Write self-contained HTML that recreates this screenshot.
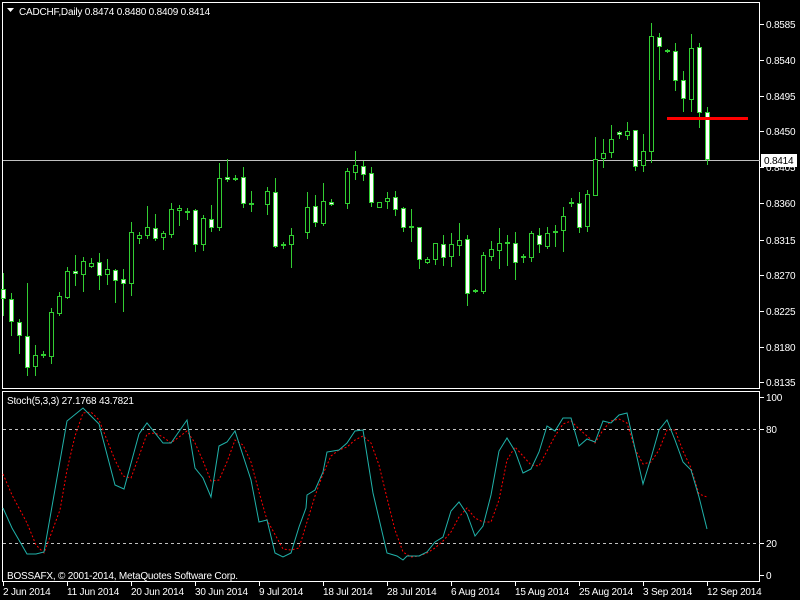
<!DOCTYPE html>
<html><head><meta charset="utf-8"><style>
html,body{margin:0;padding:0;background:#000;width:800px;height:600px;overflow:hidden}
svg{display:block}
text{font-family:"Liberation Sans",sans-serif;font-size:10px;letter-spacing:-0.2px;fill:#fff}
</style></head><body>
<svg width="800" height="600" viewBox="0 0 800 600" xmlns="http://www.w3.org/2000/svg">
<rect width="800" height="600" fill="#000"/>
<rect x="2.5" y="2.5" width="757" height="386" fill="none" stroke="#fff"/>
<rect x="2.5" y="391.5" width="757" height="190" fill="none" stroke="#fff"/>
<line x1="3" y1="160.5" x2="760" y2="160.5" stroke="#c0c0c0"/>
<path d="M7 8h7l-3.5 4z" fill="#fff"/>
<text x="19" y="15">CADCHF,Daily  0.8474 0.8480 0.8409 0.8414</text>
<g stroke="#fff">
<path d="M760 24.5h4M760 60.5h4M760 96.5h4M760 131.5h4M760 167.5h4M760 203.5h4M760 240.5h4M760 275.5h4M760 311.5h4M760 347.5h4M760 382.5h4M760 397.5h4M760 429.5h4M760 543.5h4M760 575.5h4"/>
</g>
<g>
<text x="766" y="28">0.8585</text><text x="766" y="64">0.8540</text><text x="766" y="100">0.8495</text>
<text x="766" y="135">0.8450</text><text x="766" y="171">0.8405</text><text x="766" y="207">0.8360</text>
<text x="766" y="244">0.8315</text><text x="766" y="279">0.8270</text><text x="766" y="315">0.8225</text>
<text x="766" y="351">0.8180</text><text x="766" y="386">0.8135</text>
<text x="766" y="401">100</text><text x="766" y="433">80</text><text x="766" y="547">20</text><text x="766" y="579">0</text>
</g>
<rect x="761" y="154" width="36" height="13" fill="#fff"/>
<text x="764" y="164" style="fill:#000">0.8414</text>
<path stroke="#32cd32" fill="none" d="
M3.5 273V316M11.5 293V336M19.5 319V354M27.5 283V376M35.5 345V376M43.5 351V358M51.5 308V364M59.5 292V316M67.5 267V299M75.5 255V286
M83.5 257V292M91.5 258V268M99.5 253V290M107.5 259V285M115.5 269V303M123.5 269V312M131.5 222V296M139.5 232V244M147.5 206V239M155.5 214V241
M163.5 231V250M171.5 203V238M179.5 205V226M187.5 208V220M195.5 209V252M203.5 215V251M211.5 205V232M219.5 163V231M227.5 159V182M235.5 175V181
M243.5 167V208M251.5 191V212M267.5 187V215M275.5 178V248M283.5 242V249M291.5 228V268M307.5 192V239M315.5 195V227M323.5 183V226M331.5 199V206
M347.5 168V209M355.5 151V180M363.5 161V181M371.5 167V207M379.5 202V208M387.5 192V209M395.5 191V216M403.5 207V232M411.5 209V242M419.5 227V269
M427.5 257V264M435.5 243V265M443.5 235V266M451.5 233V267M459.5 223V256M467.5 235V306M475.5 289V293M483.5 252V294M491.5 241V261M499.5 228V269
M507.5 235V266M515.5 232V280M523.5 254V263M531.5 231V262M539.5 228V253M547.5 227V249M555.5 225V247M563.5 207V252M571.5 198V207M579.5 192V233
M587.5 190V232M595.5 137V196M603.5 139V168M611.5 125V158M619.5 131V139M627.5 122V140M635.5 130V171M643.5 134V172M651.5 23V163M659.5 33V80
M667.5 49V53M675.5 43V91M683.5 71V112M691.5 34V112M699.5 43V128M707.5 107V165"/>
<g stroke="#32cd32" fill="#fff">
<rect x="1.5" y="289.5" width="4" height="9"/><rect x="9.5" y="299.5" width="4" height="22"/><rect x="17.5" y="322.5" width="4" height="13"/>
<rect x="25.5" y="336.5" width="4" height="31"/><rect x="73.5" y="271.5" width="4" height="2"/><rect x="97.5" y="262.5" width="4" height="13"/>
<rect x="113.5" y="270.5" width="4" height="10"/><rect x="121.5" y="279.5" width="4" height="4"/><rect x="153.5" y="228.5" width="4" height="10"/>
<rect x="193.5" y="210.5" width="4" height="34"/><rect x="209.5" y="219.5" width="4" height="8"/><rect x="225.5" y="177.5" width="4" height="2"/>
<rect x="241.5" y="177.5" width="4" height="26"/><rect x="273.5" y="192.5" width="4" height="54"/><rect x="313.5" y="206.5" width="4" height="16"/>
<rect x="329.5" y="202.5" width="4" height="2"/><rect x="361.5" y="166.5" width="4" height="8"/><rect x="369.5" y="173.5" width="4" height="29"/>
<rect x="393.5" y="197.5" width="4" height="12"/><rect x="401.5" y="208.5" width="4" height="19"/><rect x="417.5" y="227.5" width="4" height="32"/>
<rect x="441.5" y="244.5" width="4" height="13"/><rect x="465.5" y="239.5" width="4" height="54"/><rect x="513.5" y="243.5" width="4" height="19"/>
<rect x="537.5" y="235.5" width="4" height="9"/><rect x="577.5" y="203.5" width="4" height="24"/><rect x="617.5" y="132.5" width="4" height="2"/>
<rect x="633.5" y="130.5" width="4" height="36"/><rect x="657.5" y="37.5" width="4" height="9"/><rect x="673.5" y="51.5" width="4" height="29"/>
<rect x="681.5" y="80.5" width="4" height="18"/><rect x="697.5" y="47.5" width="4" height="65"/><rect x="705.5" y="112.5" width="4" height="47"/>
</g>
<g stroke="#32cd32" fill="#000">
<rect x="33.5" y="355.5" width="4" height="11"/><rect x="49.5" y="312.5" width="4" height="44"/><rect x="57.5" y="296.5" width="4" height="17"/>
<rect x="65.5" y="271.5" width="4" height="26"/><rect x="81.5" y="261.5" width="4" height="13"/><rect x="89.5" y="263.5" width="4" height="3"/>
<rect x="105.5" y="269.5" width="4" height="5"/><rect x="129.5" y="232.5" width="4" height="51"/><rect x="137.5" y="235.5" width="4" height="3"/>
<rect x="145.5" y="227.5" width="4" height="8"/><rect x="161.5" y="233.5" width="4" height="4"/><rect x="169.5" y="209.5" width="4" height="25"/>
<rect x="177.5" y="208.5" width="4" height="2"/><rect x="201.5" y="218.5" width="4" height="26"/><rect x="217.5" y="178.5" width="4" height="49"/>
<rect x="265.5" y="191.5" width="4" height="13"/><rect x="289.5" y="235.5" width="4" height="9"/><rect x="305.5" y="207.5" width="4" height="25"/>
<rect x="321.5" y="201.5" width="4" height="22"/><rect x="345.5" y="171.5" width="4" height="32"/><rect x="353.5" y="165.5" width="4" height="7"/>
<rect x="377.5" y="202.5" width="4" height="5"/><rect x="385.5" y="198.5" width="4" height="3"/><rect x="425.5" y="259.5" width="4" height="3"/>
<rect x="433.5" y="243.5" width="4" height="16"/><rect x="449.5" y="244.5" width="4" height="12"/><rect x="457.5" y="240.5" width="4" height="5"/>
<rect x="481.5" y="255.5" width="4" height="36"/><rect x="489.5" y="249.5" width="4" height="7"/><rect x="497.5" y="243.5" width="4" height="7"/>
<rect x="529.5" y="233.5" width="4" height="24"/><rect x="545.5" y="233.5" width="4" height="13"/><rect x="561.5" y="216.5" width="4" height="14"/>
<rect x="585.5" y="194.5" width="4" height="32"/><rect x="593.5" y="159.5" width="4" height="36"/><rect x="601.5" y="153.5" width="4" height="5"/>
<rect x="609.5" y="139.5" width="4" height="13"/><rect x="625.5" y="131.5" width="4" height="4"/><rect x="641.5" y="151.5" width="4" height="14"/>
<rect x="649.5" y="36.5" width="4" height="115"/><rect x="689.5" y="48.5" width="4" height="51"/>
</g>
<g fill="#32cd32">
<rect x="41" y="354" width="5" height="2"/><rect x="185" y="211" width="5" height="2"/><rect x="233" y="178" width="5" height="2"/>
<rect x="249" y="203" width="5" height="2"/><rect x="281" y="244" width="5" height="2"/><rect x="409" y="226" width="5" height="2"/>
<rect x="473" y="290" width="5" height="2"/><rect x="505" y="242" width="5" height="2"/><rect x="521" y="256" width="5" height="2"/>
<rect x="553" y="231" width="5" height="2"/><rect x="569" y="202" width="5" height="2"/><rect x="665" y="50" width="5" height="2"/>
</g>
<rect x="667" y="117" width="81" height="3" fill="#ff0000"/>
<text x="7" y="404">Stoch(5,3,3) 27.1768 43.7821</text>
<g stroke="#c0c0c0" stroke-dasharray="3,3">
<line x1="3" y1="429.5" x2="760" y2="429.5"/><line x1="3" y1="543.5" x2="760" y2="543.5"/>
</g>
<polyline fill="none" stroke="#ff0000" stroke-dasharray="2,2" points="3,474 12,495 27,523 36,545 44,553 60,510 67,470 75,436 83,413 91,412 99,420 107,440 115,460 123,476 131,478 139,456 147,434 155,433 163,437 171,443 179,437 187,431 195,443 203,461 211,481 219,480 227,462 235,440 243,445 251,462 259,492 267,520 283,549 291,550 299,548 307,522 315,496 323,474 331,456 339,450 347,447 355,440 363,436 371,443 379,465 387,498 395,530 403,552 411,557 419,556 427,553 435,548 443,541 451,532 459,517 467,508 475,518 483,522 491,522 499,500 507,460 515,447 523,456 531,465 539,466 547,451 555,436 563,424 571,421 579,429 587,436 595,443 603,430 611,421 619,419 627,423 635,449 643,464 651,462 659,450 667,430 675,430 683,451 691,468 699,494 707,497"/>
<polyline fill="none" stroke="#20b2aa" points="3,508 12,528 27,554 36,554 44,552 67,421 83,408 99,424 115,485 124,489 139,434 147,423 163,443 171,443 187,420 195,468 203,478 211,497 219,446 227,442 235,431 251,480 259,522 267,520 275,553 283,557 291,553 299,527 306,508 307,495 315,490 323,472 327,452 339,450 347,443 355,431 363,430 373,493 387,553 397,556 403,560 407,556 419,556 427,552 435,542 443,537 451,511 459,502 467,514 475,536 483,526 491,495 499,451 507,438 515,451 523,473 531,469 539,452 547,426 555,431 563,418 571,418 579,446 587,439 595,442 603,421 611,423 619,415 627,413 643,484 651,458 659,430 667,420 675,440 683,462 691,470 699,497 707,529"/>
<text x="7" y="579">BOSSAFX, © 2001-2014, MetaQuotes Software Corp.</text>
<path stroke="#fff" d="M3.5 582v4M67.5 582v4M131.5 582v4M195.5 582v4M259.5 582v4M323.5 582v4M387.5 582v4M451.5 582v4M515.5 582v4M579.5 582v4M643.5 582v4M707.5 582v4"/>
<g>
<text x="3" y="595">2 Jun 2014</text><text x="67" y="595">11 Jun 2014</text><text x="131" y="595">20 Jun 2014</text>
<text x="195" y="595">30 Jun 2014</text><text x="259" y="595">9 Jul 2014</text><text x="323" y="595">18 Jul 2014</text>
<text x="387" y="595">28 Jul 2014</text><text x="451" y="595">6 Aug 2014</text><text x="515" y="595">15 Aug 2014</text>
<text x="579" y="595">25 Aug 2014</text><text x="643" y="595">3 Sep 2014</text><text x="707" y="595">12 Sep 2014</text>
</g>
</svg>
</body></html>
